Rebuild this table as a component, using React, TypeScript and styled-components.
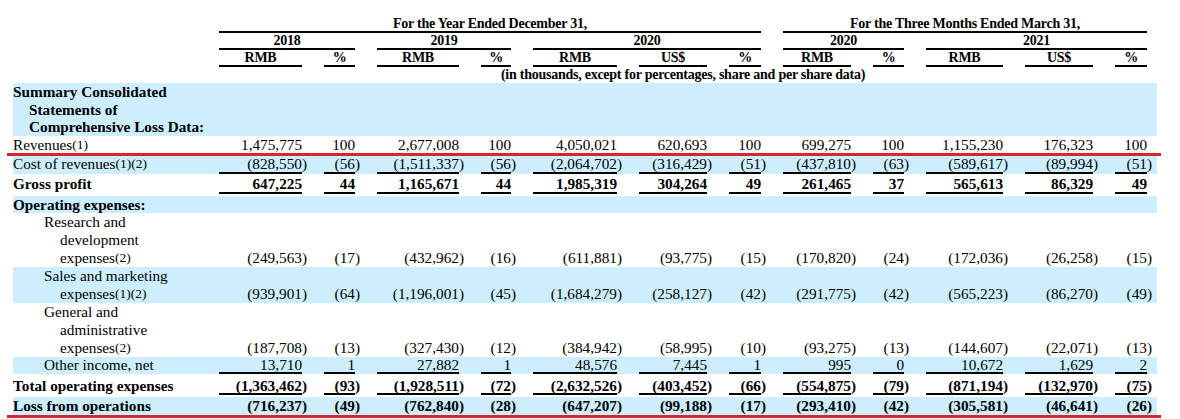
import React from 'react'
import styled, { createGlobalStyle, css } from 'styled-components'

const GlobalStyle = createGlobalStyle`
  body {
    margin: 0;
    background: #fff;
    color: #000;
    font-family: "Liberation Serif", "Times New Roman", serif;
  }
`

// label + 12 figure columns, 22px between them
const COLUMNS = '184px 83px 31px 82px 30px 84px 68px 32px 68px 31px 77px 68px 32px'

type Label = React.ReactNode[]

interface LineItem {
  label: Label
  values?: string[]
  indent?: number
  bold?: boolean
  shade?: boolean
  rule?: boolean
  top?: number
  bottom?: number
  lh?: number
  redBelow?: boolean
}

const Sup = styled.span`
  font-size: 13.5px;
  line-height: 0;
  vertical-align: 1px;
`

const lines: LineItem[] = [
  {
    label: ['Summary Consolidated', 'Statements of', 'Comprehensive Loss Data:'],
    bold: true,
    shade: true,
  },
  {
    label: [<>Revenues<Sup>(1)</Sup></>],
    values: ['1,475,775', '100', '2,677,008', '100', '4,050,021', '620,693', '100', '699,275', '100', '1,155,230', '176,323', '100'],
    redBelow: true,
  },
  {
    label: [<>Cost of revenues<Sup>(1)(2)</Sup></>],
    values: ['(828,550)', '(56)', '(1,511,337)', '(56)', '(2,064,702)', '(316,429)', '(51)', '(437,810)', '(63)', '(589,617)', '(89,994)', '(51)'],
    shade: true,
    rule: true,
  },
  {
    label: ['Gross profit'],
    values: ['647,225', '44', '1,165,671', '44', '1,985,319', '304,264', '49', '261,465', '37', '565,613', '86,329', '49'],
    bold: true,
    rule: true,
    top: 2.5,
    bottom: 2,
  },
  { label: ['Operating expenses:'], bold: true, shade: true },
  {
    label: ['Research and', 'development', <>expenses<Sup>(2)</Sup></>],
    values: ['(249,563)', '(17)', '(432,962)', '(16)', '(611,881)', '(93,775)', '(15)', '(170,820)', '(24)', '(172,036)', '(26,258)', '(15)'],
    indent: 1,
    lh: 17.9,
  },
  {
    label: ['Sales and marketing', <>expenses<Sup>(1)(2)</Sup></>],
    values: ['(939,901)', '(64)', '(1,196,001)', '(45)', '(1,684,279)', '(258,127)', '(42)', '(291,775)', '(42)', '(565,223)', '(86,270)', '(49)'],
    indent: 1,
    shade: true,
    lh: 17.9,
  },
  {
    label: ['General and', 'administrative', <>expenses<Sup>(2)</Sup></>],
    values: ['(187,708)', '(13)', '(327,430)', '(12)', '(384,942)', '(58,995)', '(10)', '(93,275)', '(13)', '(144,607)', '(22,071)', '(13)'],
    indent: 1,
    lh: 17.9,
  },
  {
    label: ['Other income, net'],
    values: ['13,710', '1', '27,882', '1', '48,576', '7,445', '1', '995', '0', '10,672', '1,629', '2'],
    indent: 1,
    shade: true,
    rule: true,
  },
  {
    label: ['Total operating expenses'],
    values: ['(1,363,462)', '(93)', '(1,928,511)', '(72)', '(2,632,526)', '(403,452)', '(66)', '(554,875)', '(79)', '(871,194)', '(132,970)', '(75)'],
    bold: true,
    rule: true,
    top: 3.4,
    bottom: 2,
  },
  {
    label: ['Loss from operations'],
    values: ['(716,237)', '(49)', '(762,840)', '(28)', '(647,207)', '(99,188)', '(17)', '(293,410)', '(42)', '(305,581)', '(46,641)', '(26)'],
    bold: true,
    shade: true,
    redBelow: true,
  },
]

const App: React.FC = () => (
  <>
    <GlobalStyle />
    <Page>
      <Table>
        <HeadRow>
          <HeadCell $span="2 / 9" $rule>For the Year Ended December 31,</HeadCell>
          <HeadCell $span="9 / 14" $rule>For the Three Months Ended March 31,</HeadCell>
        </HeadRow>
        <HeadRow>
          <HeadCell $span="2 / 4" $rule>2018</HeadCell>
          <HeadCell $span="4 / 6" $rule>2019</HeadCell>
          <HeadCell $span="6 / 9" $rule>2020</HeadCell>
          <HeadCell $span="9 / 11" $rule>2020</HeadCell>
          <HeadCell $span="11 / 14" $rule>2021</HeadCell>
        </HeadRow>
        <HeadRow>
          {['RMB', '%', 'RMB', '%', 'RMB', 'US$', '%', 'RMB', '%', 'RMB', 'US$', '%'].map((h, i) => (
            <HeadCell key={i} $span={`${i + 2} / ${i + 3}`} $rule>
              {h}
            </HeadCell>
          ))}
        </HeadRow>
        <HeadRow $last>
          <HeadCell $span="2 / 14">(in thousands, except for percentages, share and per share data)</HeadCell>
        </HeadRow>

        {lines.map((item, i) => (
          <React.Fragment key={i}>
            <Row
              $shade={item.shade}
              $bold={item.bold}
              $top={item.top}
              $bottom={item.bottom}
              $lh={item.lh}
            >
              <LabelCell $rule={item.rule}>
                {item.label.map((l, j) => (
                  <LabelLine key={j} $indent={(item.indent ?? 0) * 31 + (j > 0 ? 16 : 0)}>
                    {l}
                  </LabelLine>
                ))}
              </LabelCell>
              {item.values?.map((v, j) => (
                <Val key={j} $rule={item.rule}>
                  {v.endsWith(')') ? (
                    <>
                      {v.slice(0, -1)}
                      <Close>)</Close>
                    </>
                  ) : (
                    v
                  )}
                </Val>
              ))}
            </Row>
            {item.redBelow && <RedRule />}
          </React.Fragment>
        ))}
      </Table>
    </Page>
  </>
)

const Page = styled.div`
  padding: 16px 0 0 13px;
`

const Table = styled.div`
  width: 1144px;
`

const HeadRow = styled.div<{ $last?: boolean }>`
  display: grid;
  grid-template-columns: ${COLUMNS};
  column-gap: 22px;
  padding-right: 10px;
  font-size: 14px;
  letter-spacing: -0.25px;
  font-weight: bold;
  line-height: ${p => (p.$last ? '16px' : '15px')};
`

const HeadCell = styled.div<{ $span: string; $rule?: boolean }>`
  grid-column: ${p => p.$span};
  text-align: center;
  white-space: nowrap;
  border-bottom: ${p => (p.$rule ? '2px solid #000' : 'none')};
`

const Row = styled.div<{ $shade?: boolean; $bold?: boolean; $top?: number; $bottom?: number; $lh?: number }>`
  display: grid;
  grid-template-columns: ${COLUMNS};
  column-gap: 22px;
  align-items: end;
  padding: ${p => p.$top ?? 0}px 10px ${p => p.$bottom ?? 0}px 0;
  background: ${p => (p.$shade ? '#cceeff' : 'transparent')};
  font-size: 15.25px;
  line-height: ${p => p.$lh ?? 17.6}px;
  font-weight: ${p => (p.$bold ? 'bold' : 'normal')};
`

const underlined = css`
  line-height: 15.5px;
  padding-bottom: 2px;
`

const LabelCell = styled.div<{ $rule?: boolean }>`
  white-space: nowrap;
  ${p => p.$rule && underlined}
`

const LabelLine = styled.div<{ $indent: number }>`
  padding-left: ${p => p.$indent}px;
`

const Val = styled.div<{ $rule?: boolean }>`
  text-align: right;
  white-space: nowrap;
  ${p =>
    p.$rule &&
    css`
      line-height: 15.5px;
      border-bottom: 2px solid #000;
    `}
`

const Close = styled.span`
  margin-right: -5px;
`

const RedRule = styled.div`
  height: 3px;
  margin: 0 -4px 0 -6px;
  background: #d4262c;
`

export default App
